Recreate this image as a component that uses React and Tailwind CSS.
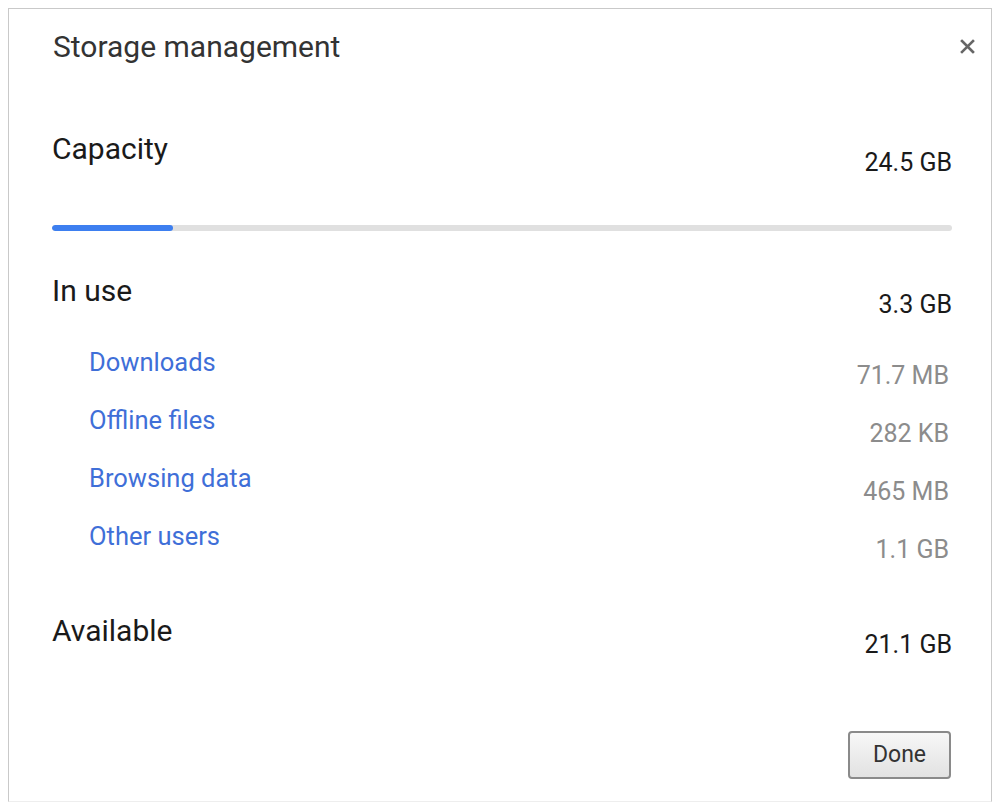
const rows = [
  { label: "Downloads", value: "71.7 MB" },
  { label: "Offline files", value: "282 KB" },
  { label: "Browsing data", value: "465 MB" },
  { label: "Other users", value: "1.1 GB" },
];

const font = { fontFamily: "Roboto, 'Liberation Sans', sans-serif" };

const App = () => {
  return (
    <div className="w-[1000px] h-[811px] bg-white overflow-hidden" style={font}>
      <div className="ml-[8px] mt-[8px] w-[984px] h-[794px] border-l border-t border-r border-[#c9c9c9] border-b border-b-[#eeeeee] flex flex-col">
        {/* header */}
        <div className="flex items-start justify-between pl-[44px] pr-[16px] pt-[19px]">
          <h1 className="text-[30px] leading-[38px] text-[#333333]">Storage management</h1>
          <button className="mt-[11px] p-0 text-[#666666]" title="Close">
            <svg width="15" height="15" viewBox="0 0 15 15">
              <path d="M2 2L13 13M13 2L2 13" stroke="#666666" strokeWidth="2.6" strokeLinecap="square" />
            </svg>
          </button>
        </div>

        <div className="flex flex-col pl-[43px] pr-[39px] mt-[64px]">
          {/* capacity */}
          <div className="flex items-start justify-between">
            <span className="text-[30px] leading-[38px] text-[#1a1a1a]">Capacity</span>
            <span className="mt-[17px] text-[25px] leading-[32px] text-[#1a1a1a]">24.5 GB</span>
          </div>
          <div className="mt-[46px] h-[6px] w-full rounded-full bg-[#e0e0e0] overflow-hidden">
            <div className="h-full w-[13.4%] rounded-full bg-[#3d7ff0]" />
          </div>

          {/* in use */}
          <div className="mt-[41px] flex items-start justify-between">
            <span className="text-[30px] leading-[38px] text-[#1a1a1a]">In use</span>
            <span className="mt-[17px] text-[25px] leading-[32px] text-[#1a1a1a]">3.3 GB</span>
          </div>

          <div className="mt-[25px] flex flex-col gap-[26px] pl-[37px] pr-[3px]">
            {rows.map((row) => (
              <div key={row.label} className="flex items-start justify-between h-[32px]">
                <a className="text-[25.5px] leading-[32px] text-[#3f6fd8] cursor-pointer">{row.label}</a>
                <span className="mt-[14px] text-[25px] leading-[32px] text-[#8c8c8c]">{row.value}</span>
              </div>
            ))}
          </div>

          {/* available */}
          <div className="mt-[60px] flex items-start justify-between">
            <span className="text-[30px] leading-[38px] text-[#1a1a1a]">Available</span>
            <span className="mt-[17px] text-[25px] leading-[32px] text-[#1a1a1a]">21.1 GB</span>
          </div>
        </div>

        <div className="mt-auto mb-[22px] flex justify-end pr-[40px]">
          <button className="w-[103px] h-[48px] rounded-[4px] border-2 border-[#8a8a8a] bg-gradient-to-b from-[#f7f7f7] to-[#e2e2e2] text-[23px] text-[#333333]">
            Done
          </button>
        </div>
      </div>
    </div>
  );
};

export default App;
